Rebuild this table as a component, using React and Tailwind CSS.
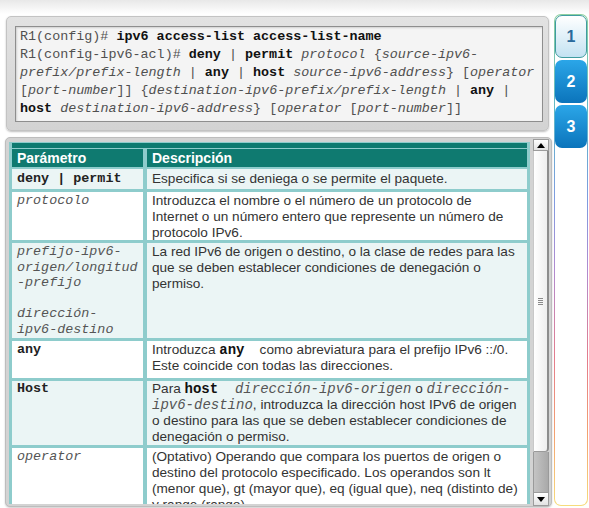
const mono = "font-['Liberation_Mono','Courier_New',monospace]";

const Line = ({ children }) => <div className="whitespace-pre">{children}</div>;

const B = ({ children }) => <span className="font-bold text-[#111]">{children}</span>;
const I = ({ children }) => <span className="italic">{children}</span>;
const M = ({ children, bold, italic }) => (
  <span
    className={
      "font-['Liberation_Mono','Courier_New',monospace] text-[14px] " +
      (bold ? "font-bold text-[#111] " : "") +
      (italic ? "italic text-[#555]" : "")
    }
  >
    {children}
  </span>
);

const CommandBox = () => (
  <div className="ml-[1px] w-[543px] h-[115px] shrink-0 rounded-[5px] border border-[#c3c3c3] bg-[linear-gradient(#e2e2e2,#d3d3d3)] pl-[8px] pr-[5px] pt-[9px] pb-[8px] shadow-[0_1px_2px_rgba(0,0,0,0.25)]">
    <div
      className={
        "h-full border border-[#8e8e8e] bg-[#f4f4f4] shadow-[inset_1px_1px_2px_rgba(0,0,0,0.15)] px-[4px] pt-[1px] text-[13.4px] leading-[18px] text-[#505050] " +
        mono
      }
    >
      <Line>
        R1(config)# <B>ipv6 access-list access-list-name</B>
      </Line>
      <Line>
        R1(config-ipv6-acl)# <B>deny</B> | <B>permit</B> <I>protocol</I> {"{"}
        <I>source-ipv6-</I>
      </Line>
      <Line>
        <I>prefix/prefix-length</I> | <B>any</B> | <B>host</B> <I>source-ipv6-address</I>
        {"}"} [<I>operator</I>
      </Line>
      <Line>
        [<I>port-number</I>]] {"{"}
        <I>destination-ipv6-prefix/prefix-length</I> | <B>any</B> |
      </Line>
      <Line>
        <B>host</B> <I>destination-ipv6-address</I>
        {"}"} [<I>operator</I> [<I>port-number</I>]]
      </Line>
    </div>
  </div>
);

const rows = [
  {
    h: "h-[20px]",
    light: true,
    pt: "pt-[2px]",
    param: <span className="font-bold text-[#222]">deny | permit</span>,
    desc: ["Especifica si se deniega o se permite el paquete."],
  },
  {
    h: "h-[48px]",
    light: false,
    pt: "pt-[1px]",
    param: <span className="italic text-[#555]">protocolo</span>,
    desc: [
      "Introduzca el nombre o el número de un protocolo de",
      "Internet o un número entero que represente un número de",
      "protocolo IPv6.",
    ],
  },
  {
    h: "h-[95px]",
    light: true,
    pt: "pt-[1px]",
    param: (
      <span className="italic text-[#555]">
        prefijo-ipv6-
        <br />
        origen/longitud
        <br />
        -prefijo
        <br />
        <br />
        dirección-
        <br />
        ipv6-destino
      </span>
    ),
    desc: [
      "La red IPv6 de origen o destino, o la clase de redes para las",
      "que se deben establecer condiciones de denegación o",
      "permiso.",
    ],
  },
  {
    h: "h-[37px]",
    light: false,
    pt: "pt-[1px]",
    param: <span className="font-bold text-[#222]">any</span>,
    desc: [
      <>
        Introduzca <M bold>any</M>
        {"    "}como abreviatura para el prefijo IPv6 ::/0.
      </>,
      "Este coincide con todas las direcciones.",
    ],
  },
  {
    h: "h-[64px]",
    light: true,
    pt: "pt-0",
    param: <span className="font-bold text-[#222]">Host</span>,
    desc: [
      <>
        Para <M bold>host</M>
        <M italic>{"  "}dirección-ipv6-origen</M> o <M italic>dirección-</M>
      </>,
      <>
        <M italic>ipv6-destino</M>, introduzca la dirección host IPv6 de origen
      </>,
      "o destino para las que se deben establecer condiciones de",
      "denegación o permiso.",
    ],
  },
  {
    h: "h-[70px]",
    light: false,
    pt: "pt-[1px]",
    param: <span className="italic text-[#555]">operator</span>,
    desc: [
      "(Optativo) Operando que compara los puertos de origen o",
      "destino del protocolo especificado. Los operandos son lt",
      "(menor que), gt (mayor que), eq (igual que), neq (distinto de)",
      "y range (rango).",
    ],
  },
];

const Table = () => (
  <div className="w-[521px] h-full overflow-hidden bg-[#8ecccc] px-[3px] pt-[1px] flex flex-col">
    <div className="h-[5px] shrink-0 bg-[#0f7a70]" />
    <div className="mt-[1px] h-[18px] shrink-0 flex gap-[4px] text-[14px] leading-[18px] font-bold text-white">
      <div className="w-[131px] bg-[#0f7a70] pl-[5px]">Parámetro</div>
      <div className="flex-1 bg-[#0f7a70] pl-[5px]">Descripción</div>
    </div>
    {rows.map((r, i) => (
      <div
        key={i}
        className={
          "shrink-0 flex gap-[4px] " + r.h + (i === 0 ? " mt-[2px]" : " mt-[3px]")
        }
      >
        <div
          className={
            "w-[131px] pl-[5px] text-[13.4px] leading-[15.5px] " +
            mono +
            " " +
            r.pt +
            (r.light ? " bg-[#ebf5f5]" : " bg-white")
          }
        >
          {r.param}
        </div>
        <div
          className={
            "flex-1 pl-[5px] text-[13.6px] leading-[16px] text-[#333] " +
            r.pt +
            (r.light ? " bg-[#ebf5f5]" : " bg-white")
          }
        >
          {r.desc.map((d, j) => (
            <div key={j} className="whitespace-pre">
              {d}
            </div>
          ))}
        </div>
      </div>
    ))}
  </div>
);

const Scrollbar = () => (
  <div className="ml-[3px] mt-[-3px] w-[16px] h-[367px] shrink-0 flex flex-col">
    <div className="h-[12px] border border-[#9c9c9c] bg-[linear-gradient(#ffffff,#e2e2e2)] flex items-center justify-center">
      <div className="w-0 h-0 border-x-[4px] border-x-transparent border-b-[5px] border-b-black" />
    </div>
    <div className="h-[301px] border-l border-l-[#c8c8c8] border-r-2 border-r-[#8c8c8c] border-b border-b-[#9a9a9a] rounded-br-[4px] bg-[linear-gradient(90deg,#ffffff,#eeeeee)] flex items-center justify-center">
      <div className="flex flex-col gap-[1px]">
        <div className="w-[5px] h-px bg-[#8a8a8a]" />
        <div className="w-[5px] h-px bg-[#8a8a8a]" />
        <div className="w-[5px] h-px bg-[#8a8a8a]" />
        <div className="w-[5px] h-px bg-[#8a8a8a]" />
      </div>
    </div>
    <div className="flex-1 border-x border-[#9a9a9a] bg-[linear-gradient(90deg,#c4c4c4,#a9a9a9)]" />
    <div className="h-[14px] border border-[#9c9c9c] bg-[linear-gradient(#ffffff,#e2e2e2)] flex items-center justify-center">
      <div className="w-0 h-0 border-x-[4px] border-x-transparent border-t-[5px] border-t-black" />
    </div>
  </div>
);

const TableFrame = () => (
  <div className="mt-[6px] mb-[1px] w-[547px] flex-1 min-h-0 rounded-[5px] border border-[#bdbdbd] bg-[#d3d3d3] pl-[3px] pt-[4px] pb-[2px] flex shadow-[0_1px_2px_rgba(0,0,0,0.2)]">
    <Table />
    <Scrollbar />
  </div>
);

const TabColumn = () => (
  <div className="ml-[1px] mt-[14px] mb-[2px] w-[34px] rounded-[7px] p-px bg-[linear-gradient(#8fd0a0,#5fb7c8_20%,#7f9be0_38%,#b08ad0_52%,#e47c8c_70%,#f3a070_85%,#f6dc7c)]">
    <div className="h-full rounded-[6px] bg-white flex flex-col">
      <div className="h-[43px] rounded-[7px] border-[1.5px] border-[#3f9ca0] bg-[linear-gradient(#ffffff,#c3e2f2)] flex items-center justify-center text-[16px] font-bold text-[#2a6a9c]">
        1
      </div>
      <div className="mt-[2px] h-[43px] rounded-[7px] bg-[linear-gradient(#2ba6e8,#0b74bb)] flex items-center justify-center text-[16px] font-bold text-white">
        2
      </div>
      <div className="mt-[2px] h-[43px] rounded-[7px] bg-[linear-gradient(#2ba6e8,#0b74bb)] flex items-center justify-center text-[16px] font-bold text-white">
        3
      </div>
    </div>
  </div>
);

export default function App() {
  return (
    <div className="w-[589px] h-[508px] overflow-hidden flex bg-[linear-gradient(#e8e8e8,#ffffff_14px)] font-['Liberation_Sans',Arial,sans-serif]">
      <div className="w-[553px] shrink-0 flex flex-col pt-[16px] pl-[5px]">
        <CommandBox />
        <TableFrame />
      </div>
      <TabColumn />
    </div>
  );
}
